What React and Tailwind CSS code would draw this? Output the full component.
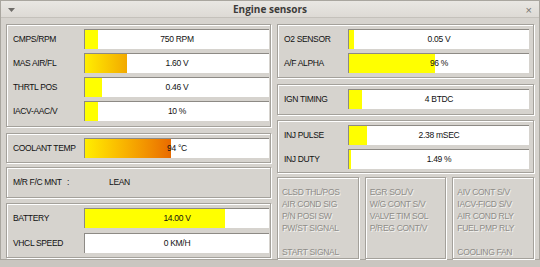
import React from "react";

const FONT = { fontFamily: '"Liberation Sans", Arial, sans-serif' };

// fill: "y" plain yellow, "mas" yellow→amber, "temp" yellow→orange
const FILLS = {
  y: "bg-[#ffff00]",
  mas: "bg-gradient-to-r from-[#ffee00] to-[#f2a900]",
  temp: "bg-gradient-to-r from-[#ffee00] to-[#e86a00]",
};

function Gauge({ label, value, fill = 0, kind = "y", labelW = "w-[77px]" }) {
  return (
    <div className="flex items-center h-[20px]">
      <div className={`${labelW} shrink-0 pl-[6px] text-[8.5px] tracking-[-0.35px] text-[#111]`}>
        {label}
      </div>
      <div className="relative flex-1 h-[20px] bg-white border-t border-l border-[#8d8a85] border-b-white border-r-white">
        <div
          className={`absolute left-0 top-0 bottom-0 ${FILLS[kind]}`}
          style={{ width: `${fill}%` }}
        />
        <div className="relative flex h-full items-center justify-center text-[8.5px] tracking-[-0.3px] text-[#111]">
          {value}
        </div>
      </div>
    </div>
  );
}

function Group({ children, className = "" }) {
  return (
    <div
      className={`border border-[#a4a19b] shadow-[inset_1px_1px_0_#ffffff,1px_1px_0_#ffffff] ${className}`}
    >
      {children}
    </div>
  );
}

function StatusPanel({ lines }) {
  return (
    <Group className="flex-1 pt-[8px] pl-[4px] h-[82px]">
      {lines.map((l, i) => (
        <div
          key={i}
          className="h-[12px] leading-[12px] text-[8.5px] tracking-[-0.3px] text-[#8e8c88] [text-shadow:1px_1px_0_#f4f3f1]"
        >
          {l}
        </div>
      ))}
    </Group>
  );
}

export default function App() {
  return (
    <div
      className="w-[540px] h-[267px] bg-[#c9c6c0] overflow-hidden"
      style={FONT}
    >
      <div className="h-[260px] border border-[#a9a69f] bg-[#d6d3ce] flex flex-col">
        {/* title bar */}
        <div className="relative h-[17px] shrink-0 flex items-center justify-center bg-gradient-to-b from-[#e9e7e3] to-[#dddad5] border-b border-[#c4c1bb]">
          <svg className="absolute left-[7px] top-[7px]" width="7" height="4" viewBox="0 0 7 4">
            <path d="M0 0h7L3.5 4z" fill="#6e6c68" />
          </svg>
          <span
            className="text-[10px] font-bold text-[#3d3c3a]"
            style={{ fontFamily: '"Open Sans", "DejaVu Sans", sans-serif' }}
          >
            Engine sensors
          </span>
          <span className="absolute right-[7px] top-[1px] text-[11px] text-[#77756f]">×</span>
        </div>

        <div className="flex gap-[6px] px-[5px] pt-[6px]">
          {/* left column */}
          <div className="w-[265px] flex flex-col">
            <Group className="flex flex-col gap-[4px] pt-[4px] pb-[5px] pr-[1px]">
              <Gauge label="CMPS/RPM" value="750 RPM" fill={7} />
              <Gauge label="MAS AIR/FL" value="1.60 V" fill={23} kind="mas" />
              <Gauge label="THRTL POS" value="0.46 V" fill={9} />
              <Gauge label="IACV-AAC/V" value="10 %" fill={7} />
            </Group>
            <Group className="mt-[6px] pt-[4px] pb-[4px] pr-[1px]">
              <Gauge label="COOLANT TEMP" value="94 °C" fill={47} kind="temp" />
            </Group>
            <Group className="mt-[4px] h-[31px] flex items-center text-[8.5px] tracking-[-0.35px] text-[#111]">
              <span className="pl-[6px] w-[60px]">M/R F/C MNT</span>
              <span className="w-[42px]">:</span>
              <span>LEAN</span>
            </Group>
            <Group className="mt-[5px] flex flex-col gap-[5px] pt-[4px] pb-[4px] pr-[1px]">
              <Gauge label="BATTERY" value="14.00 V" fill={76} />
              <Gauge label="VHCL SPEED" value="0 KM/H" fill={0} />
            </Group>
          </div>

          {/* right column */}
          <div className="flex-1 flex flex-col">
            <Group className="flex flex-col gap-[4px] pt-[4px] pb-[4px] pr-[4px]">
              <Gauge label="O2 SENSOR" value="0.05 V" fill={3} labelW="w-[70px]" />
              <Gauge label="A/F ALPHA" value="96 %" fill={48} labelW="w-[70px]" />
            </Group>
            <Group className="mt-[6px] pt-[4px] pb-[5px] pr-[4px]">
              <Gauge label="IGN TIMING" value="4 BTDC" fill={7} labelW="w-[70px]" />
            </Group>
            <Group className="mt-[5px] flex flex-col gap-[4px] pt-[4px] pb-[3px] pr-[4px]">
              <Gauge label="INJ PULSE" value="2.38 mSEC" fill={10} labelW="w-[70px]" />
              <Gauge label="INJ DUTY" value="1.49 %" fill={1} labelW="w-[70px]" />
            </Group>
            <div className="mt-[4px] flex gap-[6px]">
              <StatusPanel lines={["CLSD THL/POS", "AIR COND SIG", "P/N POSI SW", "PW/ST SIGNAL", "", "START SIGNAL"]} />
              <StatusPanel lines={["EGR SOL/V", "W/G CONT S/V", "VALVE TIM SOL", "P/REG CONT/V"]} />
              <StatusPanel lines={["AIV CONT S/V", "IACV-FICD S/V", "AIR COND RLY", "FUEL PMP RLY", "", "COOLING FAN"]} />
            </div>
          </div>
        </div>
      </div>
    </div>
  );
}
